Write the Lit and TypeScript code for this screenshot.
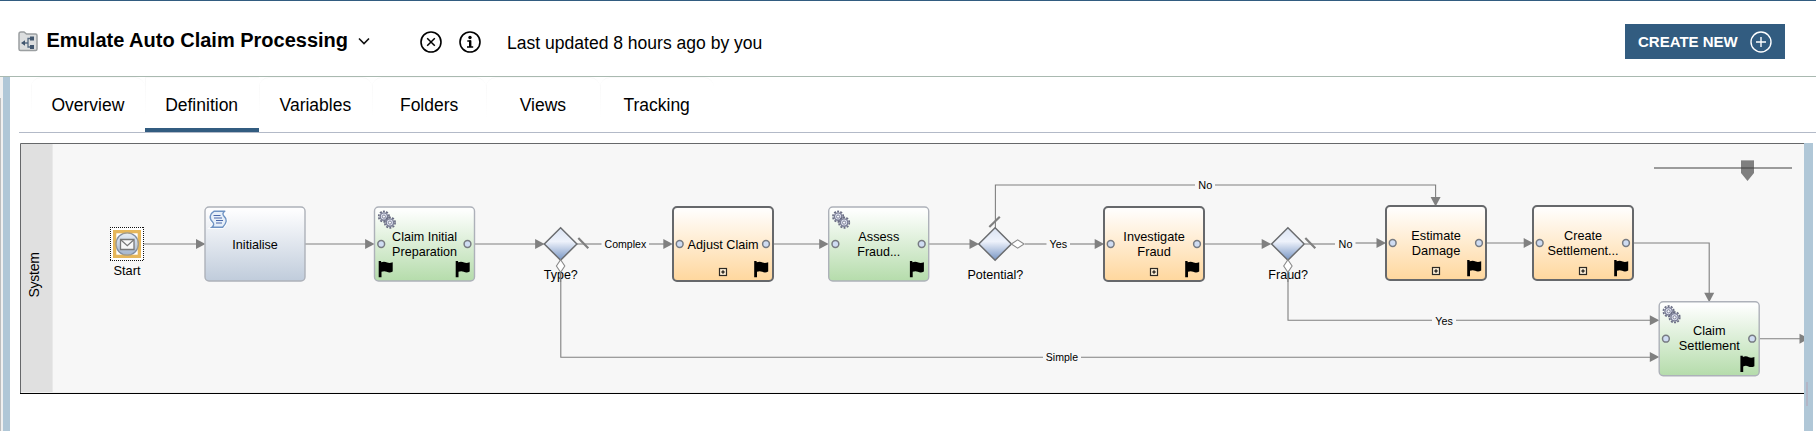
import { LitElement, html, svg, css, nothing } from "lit";
import { customElement, state } from "lit/decorators.js";

type Kind = "script" | "service" | "sub";
interface Step {
  x: number;
  y: number;
  kind: Kind;
  lines: [string, number][];
  flags: number[];
}

const STEPS: Step[] = [
  { x: 205, y: 207, kind: "script", lines: [["Initialise", 45.5]], flags: [] },
  { x: 374.5, y: 207, kind: "service", lines: [["Claim Initial", 65], ["Preparation", 65]], flags: [4, 81] },
  { x: 673, y: 207, kind: "sub", lines: [["Adjust Claim", 71]], flags: [81] },
  { x: 828.7, y: 207, kind: "service", lines: [["Assess", 41], ["Fraud...", 43]], flags: [81] },
  { x: 1104, y: 207, kind: "sub", lines: [["Investigate", 61.5], ["Fraud", 33.5]], flags: [81] },
  { x: 1386, y: 206, kind: "sub", lines: [["Estimate", 49.5], ["Damage", 48.5]], flags: [81] },
  { x: 1533, y: 206, kind: "sub", lines: [["Create", 38], ["Settlement...", 71]], flags: [81] },
  { x: 1659.2, y: 301.7, kind: "service", lines: [["Claim", 32.5], ["Settlement", 61]], flags: [81] },
];

const EDGES = [
  "M141 244H197", "M305 244H366", "M475 244H536",
  "M577 244H601.5", "M649 244H664", "M560.8 273V357.2H1043", "M1081 357.2H1650",
  "M774 244H820", "M929 244H970", "M1025 244H1046.5", "M1070 244H1096",
  "M995.4 228V185H1195", "M1215 185H1435.6V198",
  "M1205 244H1263", "M1305 244H1335", "M1355.5 243H1377",
  "M1288 273V320.2H1432", "M1456 320.2H1650",
  "M1487 243H1525", "M1634 243H1709.2V294", "M1760 338.7H1800",
];

const ARROWS: [number, number, number][] = [
  [205.5, 244, 0], [374.6, 244, 0], [544.6, 244, 0], [672.8, 244, 0], [828.7, 244, 0],
  [979, 244, 0], [1104.2, 244, 0], [1271.2, 244, 0], [1386, 243, 0], [1533.2, 243, 0],
  [1659.3, 320.3, 0], [1659.3, 357, 0], [1809, 338.7, 0], [1435.6, 206.5, 90], [1709.2, 302.3, 90],
];

const GATES: [number, string, number, number][] = [
  [560.6, "Type?", 543.8, 34], [995.1, "Potential?", 967.5, 55.8], [1287.9, "Fraud?", 1268.3, 39.8],
];

const EDGE_LABELS: [string, number, number, number][] = [
  ["Complex", 604.5, 248, 41.7], ["Yes", 1049.5, 248, 17.5], ["No", 1198.3, 189, 14],
  ["No", 1338.6, 248, 13.8], ["Yes", 1435.3, 325, 17.5], ["Simple", 1045.8, 361, 32.2],
];

const TABS = ["Overview", "Definition", "Variables", "Folders", "Views", "Tracking"];

@customElement("process-diagram")
export class ProcessDiagram extends LitElement {
  static styles = css`
    :host { display: block; }
    svg { display: block; }
    text { font-family: "Liberation Sans", Arial, sans-serif; fill: #000; }
    .label { font-size: 12.8px; }
    .edge-label { font-size: 11px; }
    .lane { font-size: 14px; }
    .edge { fill: none; stroke: #808080; stroke-width: 1.1; }
    .arrow { fill: #808080; }
  `;

  private gear(cx: number, cy: number) {
    return svg`<g transform="translate(${cx} ${cy})">
      <circle r="5.2" fill="none" stroke="#6a6d84" stroke-width="1.7" stroke-dasharray="2 1.27"/>
      <circle r="3.7" fill="#dfe2f0" stroke="#7a7e96" stroke-width="1.4"/>
      <circle r="1.6" fill="#f6f7fb" stroke="#767a92" stroke-width=".9"/>
    </g>`;
  }

  private step(s: Step) {
    const sub = s.kind === "sub";
    const mid = 37;
    return svg`<g transform="translate(${s.x} ${s.y})">
      <rect width="100" height="74" rx="4" fill="url(#${s.kind})"
        stroke=${sub ? "#66686b" : "#adb1b9"} stroke-width=${sub ? 2 : 1.4}/>
      ${s.kind === "service" ? svg`${this.gear(9.4, 9.6)}${this.gear(15.4, 15.6)}` : nothing}
      ${s.kind === "script" ? svg`
        <path d="M9.2 4.2h11c-2.6 1.2-3 3.2-1 5.2 3.2 2.8 2.6 6.6-1.5 10.8H6.8c2.2-1.6 2.5-3.6.6-5.4-3.6-3.4-2.6-8 1.8-10.6z" fill="#e6eff9" stroke="#fff" stroke-width="3"/>
        <path d="M9.2 4.2h11c-2.6 1.2-3 3.2-1 5.2 3.2 2.8 2.6 6.6-1.5 10.8H6.8c2.2-1.6 2.5-3.6.6-5.4-3.6-3.4-2.6-8 1.8-10.6z" fill="#e6eff9" stroke="#6f93c3" stroke-width="1.4"/>
        <path d="M8.5 8.5h7M9 11h8M11 13.5h7M11 16h6" stroke="#4a69aa" stroke-width="1.2"/>` : nothing}
      ${s.kind !== "script" ? [6.7, 93].map((x) => svg`<circle cx=${x} cy=${mid} r="3.4" fill="#cfdcf2" stroke="#777b82" stroke-width="1.5"/>`) : nothing}
      ${sub ? svg`<rect x="46.5" y="61.5" width="7" height="7" fill="#fff0d8" stroke="#2d2a25" stroke-width="1.2"/><path d="M50 63.2v3.6M48.200 65h3.600" stroke="#000" stroke-width="1.1"/>` : nothing}
      ${s.flags.map((f) => svg`<path transform="translate(${f} 54)" d="M.2 0H2.600V1.300C5 .2 7 .6 8.600 1.500 10.500 2.300 12 2 14.200 1.300V10.500C12 11.700 10 11.600 8.200 10.700 6.400 9.900 4.700 10 3 10.800V16.300H.2Z"/>`)}
      ${s.lines.map(([t, w], i) => svg`<text class="label" x=${50.1 - w / 2} y=${s.lines.length === 1 ? 41.7 : 33.7 + i * 15} textLength=${w} lengthAdjust="spacingAndGlyphs">${t}</text>`)}
    </g>`;
  }

  render() {
    return html`<svg width="1784" height="251" viewBox="20 143 1784 251">
      <defs>
        <linearGradient id="script" x2="0" y2="1"><stop offset=".05" stop-color="#fdfdfe"/><stop offset="1" stop-color="#c0ccdb"/></linearGradient>
        <linearGradient id="service" x2="0" y2="1"><stop offset=".05" stop-color="#fdfefd"/><stop offset="1" stop-color="#b5dcab"/></linearGradient>
        <linearGradient id="sub" x2="0" y2="1"><stop offset=".05" stop-color="#fffdfb"/><stop offset="1" stop-color="#ffd79d"/></linearGradient>
        <linearGradient id="gate" x2="0" y2="1"><stop offset=".1" stop-color="#dfe7f5"/><stop offset=".42" stop-color="#eef2fb"/><stop offset="1" stop-color="#7896c4"/></linearGradient>
        <linearGradient id="event" x2="0" y2="1"><stop offset="0" stop-color="#e9eff7"/><stop offset="1" stop-color="#a3b4cc"/></linearGradient>
      </defs>
      <rect x="20" y="143" width="1784" height="251" fill="#f7f7f7"/>
      <rect x="21" y="144" width="31" height="248" fill="#e0e0e0"/>
      <rect x="52" y="144" width="1" height="248" fill="#e9e9e9"/>
      <rect x="21" y="392" width="1783" height="1" fill="#f0f0f0"/>
      <path d="M20.500 393V143.500H1804" fill="none" stroke="#66686a"/>
      <rect x="20" y="393" width="1784" height="1" fill="#000"/>
      <text class="lane" transform="translate(39.3 297.5) rotate(-90)" textLength="45.5">System</text>

      ${EDGES.map((d) => svg`<path class="edge" d=${d}/>`)}
      ${ARROWS.map(([x, y, r]) => svg`<path class="arrow" transform="translate(${x} ${y}) rotate(${r})" d="M0 0L-9.500-5V5Z"/>`)}

      <rect x="110.500" y="227.500" width="33" height="33" fill="#fff"/>
      <path d="M110 227.500H144M110 260.500H144M110.500 227V261M143.500 227V261" stroke="#111" stroke-dasharray="1 1"/>
      <rect x="114.500" y="231.500" width="25" height="25" fill="#fff" stroke="#e6b75b" stroke-width="3"/>
      <circle cx="127.200" cy="244" r="11.200" fill="url(#event)" stroke="#808ea3" stroke-width="1.300"/>
      <rect x="116" y="233" width="22" height="22" fill="none" stroke="#e6b75b" stroke-width=".6"/>
      <path d="M120.500 239.500h13.500v10h-13.500z" fill="#f7f7f7" stroke="#777" stroke-width="1.300"/>
      <path d="M121 240l6.300 5.800 6.300-5.800" fill="none" stroke="#777" stroke-width="1.200"/>
      <text class="label" x="113.500" y="274.500" textLength="27" lengthAdjust="spacingAndGlyphs">Start</text>

      ${STEPS.map((s) => this.step(s))}
      ${GATES.map(([x, t, tx, w]) => svg`
        <path d="M${x} 227.800l16.300 16.200-16.300 16.200-16.300-16.200z" fill="url(#gate)" stroke="#6b6d70" stroke-width="1.500"/>
        <text class="label" x=${tx} y="278.700" textLength=${w} lengthAdjust="spacingAndGlyphs">${t}</text>`)}
      ${[560.6, 1287.9].map((x) => svg`<path d="M${x} 259.700l4.200 6.300-4.200 6.300-4.200-6.300z" fill="#fff" stroke="#8a8a8a" stroke-width="1.100"/><path class="edge" d="M${x} 272V282"/>`)}
      <path d="M1011.300 244l6.400-4.200 6.400 4.200-6.400 4.200z" fill="#fff" stroke="#8a8a8a" stroke-width="1.100"/>
      <path d="M578.300 238l10 10.300M1305.300 238l10 10.300M989.300 227l10.500-10.200" stroke="#808080" stroke-width="2.200"/>
      ${EDGE_LABELS.map(([t, x, y, w]) => svg`<text class="edge-label" x=${x} y=${y} textLength=${w} lengthAdjust="spacingAndGlyphs">${t}</text>`)}

      <path d="M1654 168H1792" stroke="#9b9b9b" stroke-width="2"/>
      <path d="M1741 160h13v13l-6.500 8-6.500-8z" fill="#7f7f7f"/>
      <path d="M1741 160.500h13" stroke="#aaa"/>
      <path d="M1741 168h13" stroke="#5f5f5f" stroke-width="2"/>
    </svg>`;
  }
}

@customElement("app-root")
export class AppRoot extends LitElement {
  @state() private active = "Definition";

  static styles = css`
    :host {
      display: flex; flex-direction: column; height: 431px; box-sizing: border-box;
      overflow: hidden; background: #fff; color: #000; border-top: 1px solid #325c80;
      font-family: "Liberation Sans", Arial, sans-serif;
    }
    header {
      display: flex; align-items: center; height: 75px; flex: none; padding: 0 31px 0 18px;
      border-bottom: 1px solid #a9b9b0;
    }
    svg { display: block; flex: none; }
    .process { margin-top: 5px; }
    h1 { margin: 0 9px 0 8.500px; width: 302.5px; font-size: 20px; line-height: 24px; font-weight: 700; white-space: nowrap; padding-top: 3px; }
    .chevron { margin-top: 5px; }
    .close { margin-left: 50px; }
    .info { margin-left: 17px; }
    .updated { margin-left: 26px; font-size: 17.55px; line-height: 22px; padding-top: 9px; white-space: nowrap; }
    .create {
      display: flex; align-items: center; justify-content: space-between; box-sizing: border-box;
      margin: 6px 0 0 auto; padding: 0 13px; width: 160px; height: 35px; border: 0;
      background: #325c80; color: #fff; font: 700 15px "Liberation Sans", Arial, sans-serif; white-space: nowrap;
    }
    .body { display: flex; flex: 1; min-height: 0; }
    .rail { width: 3px; background: #f0f0f0; flex: none; padding-top: 21px; display: flex; box-sizing: border-box; }
    .rail-line { width: 1px; background: #bdbdbd; }
    .gutter { width: 7px; background: #b0c7d7; flex: none; }
    .main { flex: 1; min-width: 0; display: flex; flex-direction: column; padding-left: 9px; }
    nav { display: flex; height: 55px; flex: none; padding-left: 12px; border-bottom: 1px solid #b3bac8; }
    .tab {
      box-sizing: border-box; width: 113.75px; height: 55px; padding: 16px 0 0; text-align: center;
      font-size: 17.5px; line-height: 22px; border-radius: 10px 10px 0 0;
      background: linear-gradient(#f8f8f8, #fff 39px) 0 0 / 1px 39px no-repeat; border-top: 1px solid #f9f9f9;
    }
    .tab.active { border-bottom: 4px solid #325c80; border-radius: 0; }
    .work { display: flex; flex: 1; min-height: 0; padding: 10px 3px 0 1px; }
    .scroll { width: 9px; background: #b0c7d7; box-sizing: border-box; padding: 239px 5px 0 2px; }
    .thumb { height: 24px; background: #b3b5c5; }
  `;

  render() {
    return html`
      <header>
        <svg class="process" width="20" height="21" viewBox="0 0 20 21">
          <path d="M1 3Q1 1 3 1H6L8.500 3H17.500Q19 3 19 4.500V18Q19 19.500 17.500 19.500H2.500Q1 19.500 1 18Z" fill="#dcdedf" stroke="#9b9fa1" stroke-width="1.500"/>
          <path d="M5 12H9.500M13 7.500H10V16H13" fill="none" stroke="#566b82" stroke-width="1.300"/>
          <path d="M3 12l4-2.800v5.600zM12 5.500h4v4h-4zM12 14h4v4h-4z" fill="#41566e"/>
        </svg>
        <h1>Emulate Auto Claim Processing</h1>
        <svg class="chevron" width="12" height="8" viewBox="0 0 12 8"><path d="M1 1.500l5 5 5-5" fill="none" stroke="#111" stroke-width="1.600"/></svg>
        <svg class="close" width="22" height="28" viewBox="0 0 22 28"><circle cx="11" cy="17" r="10" fill="none" stroke="#000" stroke-width="1.600"/><path d="M7.200 13.200l7.600 7.600M14.800 13.200l-7.600 7.600" stroke="#000" stroke-width="1.500"/></svg>
        <svg class="info" width="22" height="28" viewBox="0 0 22 28"><circle cx="11" cy="17" r="10" fill="none" stroke="#000" stroke-width="1.600"/><circle cx="11" cy="12.500" r="1.700"/><path d="M8.300 16H11.200V22M8 22H14.200" fill="none" stroke="#000" stroke-width="1.600"/><path d="M10 15.500h2.400v6.500H10z"/></svg>
        <span class="updated">Last updated 8 hours ago by you</span>
        <button class="create">CREATE NEW
          <svg width="22" height="22" viewBox="0 0 22 22"><circle cx="11" cy="11" r="10" fill="none" stroke="#fff" stroke-width="1.400"/><path d="M11 6v10M6 11h10" stroke="#fff" stroke-width="1.400"/></svg>
        </button>
      </header>
      <div class="body">
        <div class="rail"><div class="rail-line"></div></div>
        <div class="gutter"></div>
        <div class="main">
          <nav>
            ${TABS.map((t) => html`<div class="tab ${t === this.active ? "active" : ""}" @click=${() => (this.active = t)}>${t}</div>`)}
          </nav>
          <div class="work">
            <process-diagram></process-diagram>
            <div class="scroll"><div class="thumb"></div></div>
          </div>
        </div>
      </div>`;
  }
}
